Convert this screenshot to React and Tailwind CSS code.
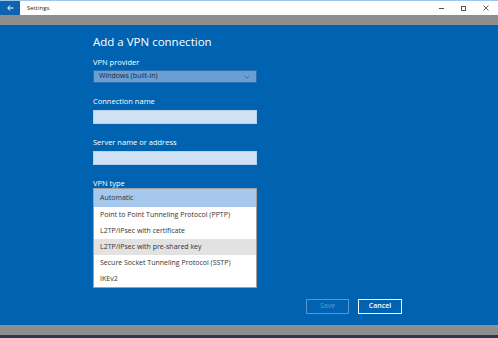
import React from 'react';

const vpnTypes = [
  { label: 'Automatic', state: 'selected' },
  { label: 'Point to Point Tunneling Protocol (PPTP)' },
  { label: 'L2TP/IPsec with certificate' },
  { label: 'L2TP/IPsec with pre-shared key', state: 'hover' },
  { label: 'Secure Socket Tunneling Protocol (SSTP)' },
  { label: 'IKEv2' },
];

const font = { fontFamily: '"Open Sans", "Noto Sans", sans-serif' };

const Field = ({ label }) => (
  <>
    <div className="mt-[14px] h-[9px] text-[7.5px] leading-[9px] text-white">{label}</div>
    <div className="mt-[4px] h-[14px] w-[164px] bg-[#cfe1f2] border border-[#b8d2ea]"></div>
  </>
);

const App = () => {
  return (
    <div className="w-[498px] h-[338px] flex flex-col overflow-hidden" style={font}>
      {/* Title bar */}
      <div className="h-[15px] flex items-stretch bg-white border-t border-[#9cc6ee]">
        <div className="w-[20px] bg-[#0f62b0] flex items-center justify-center">
          <svg width="7" height="6" viewBox="0 0 7 6" fill="none" stroke="white" strokeWidth="1">
            <path d="M3 0.5 L0.8 3 L3 5.5 M0.8 3 H6.5" />
          </svg>
        </div>
        <div className="pl-[7px] flex items-center text-[6px] text-[#222]">Settings</div>
        <div className="ml-auto flex items-center">
          <div className="w-[22px] flex justify-center">
            <div className="w-[5px] h-px bg-[#555]"></div>
          </div>
          <div className="w-[22px] flex justify-center">
            <div className="w-[5px] h-[5px] border border-[#555]"></div>
          </div>
          <div className="w-[24px] flex justify-center">
            <svg width="6" height="6" viewBox="0 0 6 6" stroke="#555" strokeWidth="0.9">
              <path d="M0.5 0.5 L5.5 5.5 M5.5 0.5 L0.5 5.5" />
            </svg>
          </div>
        </div>
      </div>
      <div className="h-[10px] bg-[#8e8e8e]"></div>

      {/* Main panel */}
      <div className="flex-1 bg-[#0063b1] pl-[93px] pt-[9px]">
        <h1 className="h-[16px] text-[11.5px] leading-[16px] text-white font-normal">Add a VPN connection</h1>

        <div className="mt-[8px] h-[9px] text-[7.5px] leading-[9px] text-white">VPN provider</div>
        <div className="mt-[3px] h-[13px] w-[164px] bg-[#6a9fd2] border border-[#2f6fae] flex items-center justify-between pl-[5px] pr-[6px]">
          <span className="text-[7px] text-[#1c2a3a]">Windows (built-in)</span>
          <svg width="6" height="4" viewBox="0 0 6 4" fill="none" stroke="#3b5f86" strokeWidth="0.8">
            <path d="M0.5 0.8 L3 3.2 L5.5 0.8" />
          </svg>
        </div>

        <Field label="Connection name" />
        <Field label="Server name or address" />

        <div className="mt-[14px] h-[9px] text-[7.5px] leading-[9px] text-white">VPN type</div>
        <div className="w-[164px] bg-white border border-[#a0a0a0] flex flex-col">
          {vpnTypes.map((t) => (
            <div
              key={t.label}
              className={
                'pl-[6px] flex items-center text-[7px] text-[#333] ' +
                (t.state === 'selected'
                  ? 'h-[18px] bg-[#a6c8ec]'
                  : t.state === 'hover'
                  ? 'h-[16px] bg-[#e2e2e2]'
                  : 'h-[16px]')
              }
            >
              {t.label}
            </div>
          ))}
        </div>

        <div className="mt-[11px] ml-[213px] flex gap-[9px]">
          <div className="w-[43px] h-[15px] border border-[#5a97d0] flex items-center justify-center text-[7px] text-[#5e9bd3]">
            Save
          </div>
          <div className="w-[44px] h-[15px] border-[1.5px] border-white flex items-center justify-center text-[7px] text-white font-semibold">
            Cancel
          </div>
        </div>
      </div>

      <div className="h-[10px] bg-[#8e8e8e]"></div>
      <div className="h-[3px] bg-[#2b3a4a]"></div>
    </div>
  );
};

export default App;
